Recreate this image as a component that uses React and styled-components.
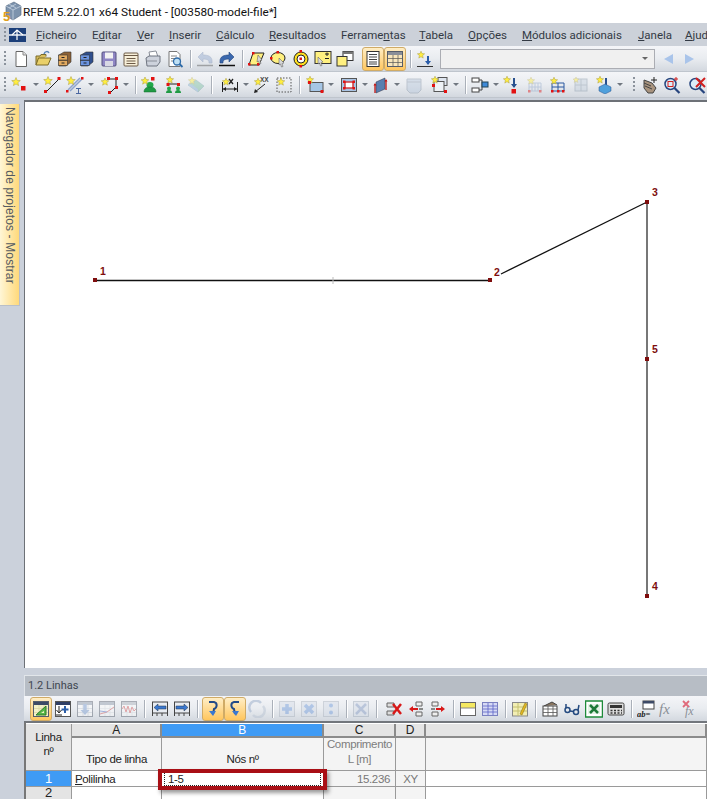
import React from 'react';
import styled, { createGlobalStyle } from 'styled-components';

const GlobalStyle = createGlobalStyle`
  html, body { margin: 0; padding: 0; background: #fff; }
  body { font-family: "Open Sans", "Liberation Sans", sans-serif; }
`;

const Page = styled.div`
  width: 707px;
  height: 799px;
  overflow: hidden;
  display: flex;
  flex-direction: column;
  background: #cbd1db;
`;

const TitleBar = styled.div`
  height: 23px;
  background: #fff;
  display: flex;
  align-items: center;
  padding-left: 2px;
  font-family: Roboto, sans-serif;
  font-size: 11.8px;
  color: #111;
  flex: none;
`;

const MenuBar = styled.div`
  height: 23px;
  background: #ccd1d9;
  display: flex;
  align-items: center;
  flex: none;
  white-space: nowrap;
`;

const LogoSlot = styled.div`
  width: 27px;
  flex: none;
  display: flex;
`;

const Grip = styled.div`
  width: 2px;
  height: ${({ $h }) => $h || 16}px;
  margin: 0 ${({ $r }) => $r ?? 3}px 0 ${({ $l }) => $l ?? 4}px;
  flex: none;
  background: repeating-linear-gradient(to bottom, #8b929c 0 2px, transparent 2px 4px);
`;

const MenuItem = styled.span`
  width: ${({ $w }) => $w}px;
  flex: none;
  font-family: Roboto, sans-serif;
  font-size: 11.5px;
  color: #333a44;
`;

const Toolbar = styled.div`
  height: ${({ $h }) => $h || 26}px;
  flex: none;
  display: flex;
  align-items: center;
  white-space: nowrap;
  overflow: hidden;
  padding-left: ${({ $pad }) => $pad || 0}px;
  background: linear-gradient(to bottom, #f4f5f8 0%, #e9ecf0 50%, #d3d8df 100%);
  border-bottom: 1px solid #bfc5cd;
  box-sizing: border-box;
`;

const ToolButton = styled.div`
  width: ${({ $w }) => $w || 22}px;
  height: 24px;
  flex: none;
  display: flex;
  align-items: center;
  justify-content: center;
  box-sizing: border-box;
  border-radius: 3px;
  border: ${({ $active }) => ($active ? '1px solid #d0ab66' : 'none')};
  background: ${({ $active }) => ($active ? 'linear-gradient(to bottom, #ffeec6, #ffc65e)' : 'none')};
  svg { opacity: ${({ $dim }) => ($dim ? 0.45 : 1)}; }
`;

const DropArrow = styled.div`
  width: ${({ $w }) => $w || 10}px;
  flex: none;
  display: flex;
  justify-content: center;
  &::after {
    content: "";
    border-left: 3px solid transparent;
    border-right: 3px solid transparent;
    border-top: 3px solid #707780;
  }
`;

const Separator = styled.div`
  width: ${({ $w }) => $w || 8}px;
  height: 18px;
  flex: none;
  display: flex;
  justify-content: center;
  &::after {
    content: "";
    width: 1px;
    height: 100%;
    background: #aab0b9;
    box-shadow: 1px 0 0 #fff;
  }
`;

const ComboBox = styled.div`
  width: 215px;
  height: 20px;
  flex: none;
  margin-left: 4px;
  box-sizing: border-box;
  border: 1px solid #abadb3;
  background: #f0f0f0;
  display: flex;
  align-items: center;
  justify-content: flex-end;
  padding-right: 6px;
  &::after {
    content: "";
    border-left: 3px solid transparent;
    border-right: 3px solid transparent;
    border-top: 3px solid #666;
  }
`;

const NavArrow = styled.div`
  width: 0;
  height: 0;
  flex: none;
  margin-left: ${({ $l }) => $l}px;
  border-top: 5px solid transparent;
  border-bottom: 5px solid transparent;
  ${({ $left }) => ($left ? 'border-right: 9px solid #a9c4ea;' : 'border-left: 9px solid #a9c4ea;')}
`;

const Main = styled.div`
  height: 568px;
  flex: none;
  margin-top: 2px;
  display: flex;
`;

const Rail = styled.div`
  width: 24px;
  flex: none;
  padding-top: 4px;
  box-sizing: border-box;
`;

const NavTab = styled.div`
  width: 20px;
  height: 202px;
  box-sizing: border-box;
  writing-mode: vertical-rl;
  padding: 3px 0 0 0;
  display: flex;
  align-items: center;
  font-family: "Liberation Sans", sans-serif;
  font-size: 12px;
  letter-spacing: 0.13px;
  color: #555a62;
  background: linear-gradient(to right, #fff6d6, #ffd97a);
  border-right: 1px solid #b9bfc8;
  border-bottom: 1px solid #b9bfc8;
`;

const Canvas = styled.div`
  flex: 1;
  background: #fff;
  border-left: 1px solid #6d7177;
  border-top: 2px solid #6d7177;
  box-sizing: border-box;
  svg { display: block; width: 100%; height: 100%; }
`;

const Panel = styled.div`
  margin: 7px 0 0 24px;
  flex: 1;
  display: flex;
  flex-direction: column;
  min-height: 0;
`;

const PanelTitle = styled.div`
  height: 21px;
  flex: none;
  background: #b7bdc5;
  border-top: 1px solid #e2e6ea;
  border-left: 1px solid #dfe3e8;
  box-sizing: border-box;
  padding-left: 3px;
  line-height: 20px;
  font-family: Roboto, sans-serif;
  font-size: 11px;
  color: #3e4650;
`;

const PanelBar = styled(Toolbar)`
  height: 27px;
  border-bottom: 2px solid #72767c;
`;

const TableGrid = styled.div`
  flex: 1;
  display: grid;
  grid-template-columns: 46px 90px 162px 72px 30px 1fr;
  grid-template-rows: 14px 33px 16px 13px;
  padding-top: 1px;
  background: #fff;
  border-left: 2px solid #777;
  font-family: "Liberation Sans", sans-serif;
  font-size: 11.5px;
  letter-spacing: -0.35px;
  color: #222;
`;

const Cell = styled.div`
  box-sizing: border-box;
  border-right: 1px solid #9a9a9a;
  border-bottom: 1px solid #9a9a9a;
  display: flex;
  align-items: center;
  justify-content: ${({ $align }) => $align || 'flex-start'};
  padding: 0 ${({ $pad }) => $pad ?? 3}px;
  position: relative;
  z-index: ${({ $raised }) => ($raised ? 2 : 'auto')};
  color: ${({ $color }) => $color || '#222'};
  background: ${({ $bg }) => $bg || '#fff'};
  white-space: nowrap;
`;

const ColHead = styled(Cell)`
  justify-content: center;
  background: ${({ $sel }) => ($sel ? '#3f9bf5' : '#e4e4e4')};
  color: ${({ $sel }) => ($sel ? '#fff' : '#222')};
  border-bottom: 2px solid #8b8b8b;
  border-right: 2px solid #8b8b8b;
  padding: 0;
  font-size: 12px;
`;

const CornerCell = styled(Cell)`
  grid-row: span 2;
  background: #e4e4e4;
  text-align: center;
  justify-content: center;
  line-height: 14px;
  padding: 0 0 6px;
`;

const SubHead = styled(Cell)`
  background: #f4f4f4;
  flex-direction: column;
  justify-content: flex-end;
  line-height: 15px;
  padding-bottom: 3px;
  color: ${({ $color }) => $color || '#222'};
`;

const RowHead = styled(Cell)`
  justify-content: center;
  background: ${({ $sel }) => ($sel ? '#3f9bf5' : '#e4e4e4')};
  color: ${({ $sel }) => ($sel ? '#fff' : '#222')};
  font-size: 13px;
  line-height: 12px;
`;

const FocusText = styled.span`
  flex: 1;
  outline: 1px dotted #222;
  height: 12px;
  line-height: 12px;
  padding-left: 3px;
`;

const Highlight = styled.div`
  position: absolute;
  left: -4px;
  right: -4px;
  top: -2px;
  height: 21px;
  box-sizing: border-box;
  border: 4px solid #a90f15;
  box-shadow: 2px 3px 4px rgba(0, 0, 0, 0.4);
  pointer-events: none;
`;

const R = ({ x, y, s = 3.5 }) => <rect x={x} y={y} width={s} height={s} fill="#e21212" />;
const S = ({ x = 4, y = 4, r = 3.8 }) => {
  const cx = Number(x);
  const cy = Number(y);
  const rad = Number(r);
  const pts = [];
  for (let i = 0; i < 10; i++) {
    const a = (Math.PI / 5) * i - Math.PI / 2;
    const d = i % 2 ? rad * 0.45 : rad;
    pts.push(`${(cx + d * Math.cos(a)).toFixed(1)},${(cy + d * Math.sin(a)).toFixed(1)}`);
  }
  return <polygon points={pts.join(' ')} fill="#ffee40" stroke="#a99b3c" strokeWidth="0.5" />;
};
const Tbl = ({ head = '#3c4a6a', fill = '#fff', line = '#8a94a5' }) => (
  <>
    <rect x="1.5" y="1.5" width="15" height="15" fill={fill} stroke="#555d6b" />
    <rect x="2" y="2" width="14" height="3" fill={head} />
    <path d="M2 8.5h14M2 12.5h14M7 5v11M12 5v11" stroke={line} strokeWidth="0.7" />
  </>
);
const Drawer = ({ a, b }) => (
  <>
    <path d="M3 5l5-3h7v10l-5 4H3z" fill={b} stroke="#333" strokeWidth="0.6" />
    <rect x="2.5" y="5" width="9" height="5" fill={a} stroke="#333" strokeWidth="0.6" />
    <rect x="2.5" y="10.5" width="9" height="5" fill={a} stroke="#333" strokeWidth="0.6" />
    <path d="M5.5 7.5h3M5.5 13h3" stroke="#222" strokeWidth="1" />
  </>
);

const ICONS = {
  doc: <><path d="M4 1.5h7l3.5 3.5v11.5H4z" fill="#fff" stroke="#666" /><path d="M11 1.5V5h3.5" fill="#e4e4e4" stroke="#888" /></>,
  folder: <><path d="M2 15V6h4l1-1.5h5v2" fill="#d9bf5e" stroke="#7a6a2a" /><path d="M2 15l2.5-7H17l-3 7z" fill="#e9d06a" stroke="#7a6a2a" /><path d="M10 4c1-3 4-3 5-1" fill="none" stroke="#5a86b8" strokeWidth="1.5" /></>,
  brown: <Drawer a="#e2aa60" b="#8e6236" />,
  blue: <Drawer a="#6b94e0" b="#2f4f8e" />,
  floppy: <><rect x="2" y="2" width="14" height="14" rx="1" fill="#8f86c4" stroke="#54507e" /><rect x="5" y="2.5" width="8" height="6" fill="#f2f2f2" /><rect x="5" y="11" width="8" height="5" fill="#d8d8e4" /></>,
  notes: <><rect x="2" y="3" width="14" height="13" rx="1" fill="#f7efd9" stroke="#6c5a46" /><path d="M2 5.5h14M4.5 8.5h9M4.5 11h9M4.5 13.5h9" stroke="#6c5a46" /></>,
  printer: <><path d="M5 2l7-1 2 6H6z" fill="#fff" stroke="#8a8f99" /><path d="M2 8l3-2h11v6l-3 4H3z" fill="#cdd2dc" stroke="#6e7480" /><path d="M3 11h10" stroke="#8a8f99" /></>,
  preview: <><path d="M3 1.5h8l3 3v12H3z" fill="#fff" stroke="#777" /><path d="M5 6h6M5 8.5h4M5 11h3" stroke="#888" /><circle cx="11" cy="11.5" r="3.5" fill="#bfe0f4" stroke="#2d6aa8" strokeWidth="1.3" /><path d="M13.5 14l3 3" stroke="#2d6aa8" strokeWidth="1.8" /></>,
  undo: <><path d="M2 7l5-5v3c6 0 9 2 9 6v2h-3v-1c0-2-2-3-6-3v3z" fill="#8fa6cc" stroke="#6b82a8" strokeWidth="0.6" /><path d="M1 15.5h16" stroke="#555" strokeWidth="1.5" /></>,
  redo: <><path d="M16 7l-5-5v3C5 5 2 7 2 11v2h3v-1c0-2 2-3 6-3v3z" fill="#3a68ae" stroke="#23457e" strokeWidth="0.6" /><path d="M1 15.5h16" stroke="#111" strokeWidth="1.5" /></>,
  area: <><path d="M5 3h11l-5 12H1z" fill="#fff080" stroke="#222" /><R x="4" y="2" s="2.5" /><R x="0" y="13" s="2.5" /><R x="9" y="13" s="2.5" /><path d="M10 5l4 5-2 .5 1 3-1.5.5-1-3-1.500 1z" fill="#d8d8d8" stroke="#555" strokeWidth="0.5" /></>,
  ellipse: <><ellipse cx="8" cy="8" rx="7" ry="5.5" fill="#fff080" stroke="#222" /><R x="6.5" y="1" s="2.5" /><R x="0" y="7" s="2.5" /><path d="M9 8l5 5-2 .5 1 3-1.5.5-1-3-1.500 1z" fill="#d8d8d8" stroke="#555" strokeWidth="0.5" /></>,
  ring: <><circle cx="9" cy="9" r="7" fill="#ffe020" stroke="#222" /><circle cx="9" cy="9" r="4" fill="#fff" stroke="#222" /><R x="7.5" y="7.5" s="2.5" /><R x="7.5" y="0" s="2.5" /><R x="7.5" y="15" s="2.5" /></>,
  boxPlus: <><rect x="1" y="1.5" width="16" height="12" fill="#fff080" stroke="#333" /><path d="M11 4h4M13 2.5v3.5M11 8.5h4" stroke="#222" /><path d="M4 7l5 5-2 .5 1 3-1.5.5-1-3-1.500 1z" fill="#d8d8d8" stroke="#555" strokeWidth="0.5" /></>,
  windows: <><rect x="7" y="1.5" width="10" height="9" fill="#fff" stroke="#333" /><rect x="7" y="1.5" width="10" height="2.5" fill="#777" /><rect x="1" y="6.5" width="10" height="9.5" fill="#fff080" stroke="#333" /></>,
  list: <><rect x="3" y="1.5" width="12" height="15" fill="#fff" stroke="#333" /><path d="M5 4.5h8M5 7h8M5 9.5h8M5 12h8M5 14h8" stroke="#444" /></>,
  table: <Tbl head="#8a8f98" fill="#f8e6bc" line="#555" />,
  starDown: <><S x="5" y="5" /><path d="M12 6v8" stroke="#2a5ca8" strokeWidth="2" /><path d="M9 11l3 4 3-4z" fill="#2a5ca8" /><path d="M1 16.5h16" stroke="#333" /></>,
  node: <><S x="5" y="6" r="4.5" /><R x="10" y="10" s="4.5" /></>,
  line: <><path d="M3 16L16 3" stroke="#222" /><S x="5" y="5" r="4.5" /><R x="1" y="14" s="3" /><R x="14.5" y="1" s="3" /></>,
  dim: <><path d="M2 14L14 2M4 15L16 3" stroke="#8ea4cc" strokeWidth="1.5" /><S x="5" y="5" r="4.5" /><R x="0" y="14" s="2.5" /><R x="15" y="1" s="2.5" /><path d="M10 12.5h5M12.5 12.5v5M10 17.5h5" stroke="#3c5a98" strokeWidth="0.9" /></>,
  poly: <><path d="M6 3h9v8l-6 6" fill="none" stroke="#222" /><S x="4" y="6" r="4" /><R x="6" y="1" s="3" /><R x="14" y="1" s="3" /><R x="14" y="10" s="3" /><R x="7" y="15" s="3" /></>,
  support: <><ellipse cx="9" cy="9" rx="3.5" ry="3" fill="#22a84a" /><path d="M3 16c0-4 3-5 6-5s6 1 6 5z" fill="#1f9a44" stroke="#0f6a2a" strokeWidth="0.5" /><S x="4" y="5" r="4" /><R x="10" y="1" s="3.5" /></>,
  supports: <><path d="M3 8h11" stroke="#222" /><circle cx="4" cy="12.5" r="2" fill="#22a84a" /><circle cx="13" cy="12.5" r="2" fill="#22a84a" /><path d="M1 17c0-2 1-3 3-3s3 1 3 3zM10 17c0-2 1-3 3-3s3 1 3 3z" fill="#1f9a44" /><S x="5" y="4" r="3.8" /><R x="1.5" y="7" s="3" /><R x="12" y="7" s="3" /></>,
  plate: <><path d="M1 9l8-5 8 6-6 6z" fill="#7dc0a0" stroke="#5a8a9a" strokeWidth="0.5" /><path d="M1 9l10 7v-3L2 7z" fill="#8ab2d8" /><S x="5" y="5" r="3.8" /></>,
  dimX: <><path d="M1.500 6v10M16.500 6v10M2 13h14" stroke="#222" /><path d="M2 13l3-2v4zM16 13l-3-2v4z" fill="#222" /><path d="M8 3l4 5M12 3L8 8" stroke="#222" strokeWidth="1.3" /><S x="5" y="6" r="3.8" /></>,
  arrowXX: <><path d="M2 16L12 8" stroke="#222" /><path d="M1 17l1-4 3 3z" fill="#222" /><text x="7" y="6" fontSize="6.5" fontWeight="bold" fontFamily="Liberation Sans" fill="#444">XX</text><S x="5" y="6" r="3.8" /></>,
  dashSq: <><rect x="2" y="2" width="14" height="14" fill="none" stroke="#555" strokeDasharray="1.5 1.5" /><S x="6" y="6" r="4" /></>,
  rectNew: <><rect x="4" y="6.5" width="13" height="9" fill="#a6c6e6" stroke="#555" /><S x="4" y="4" r="3.8" /><R x="2" y="5" s="3" /><R x="14.5" y="14" s="3" /></>,
  rectRed: <><rect x="1.5" y="2.5" width="15" height="13" fill="#a9c4e4" stroke="#555" /><rect x="5" y="6" width="8" height="6" fill="#fff" stroke="#d12020" strokeWidth="1.3" /><R x="3" y="4.5" s="2.5" /><R x="12.5" y="4.5" s="2.5" /><R x="3" y="11" s="2.5" /><R x="12.5" y="11" s="2.5" /></>,
  wall: <><path d="M4 6l9-4v11l-9 4z" fill="#5a7fb0" stroke="#334" strokeWidth="0.5" /><path d="M3 17V8M14 14V4" stroke="#c01818" strokeWidth="1.3" /><path d="M1.500 9.500L3 7l1.500 2.500zM12.500 5.500L14 3l1.500 2.500z" fill="#c01818" /></>,
  box: <><path d="M2 3h14v11l-3 3H5l-3-3z" fill="#b8c8dc" stroke="#8b99aa" /><path d="M2 6h14" stroke="#8b99aa" /></>,
  boxes: <><rect x="7" y="1.5" width="9" height="8" fill="#dfe6f0" stroke="#555" /><rect x="3" y="5.5" width="10" height="10" fill="#eef2f6" stroke="#555" /><S x="4" y="4" r="3.8" /><R x="1" y="8" s="3" /><R x="13" y="14" s="3" /></>,
  connect: <><rect x="1" y="2" width="7" height="4" fill="#fff" stroke="#444" /><rect x="1" y="12" width="7" height="4" fill="#fff" stroke="#444" /><path d="M8 4h3v10H8" fill="none" stroke="#444" /><rect x="11" y="6" width="6" height="5" fill="#3f8ad8" stroke="#245" /></>,
  starLoad: <><S x="4" y="4" r="3.8" /><path d="M11 2v9" stroke="#28508e" strokeWidth="2" /><path d="M8 8l3 4 3-4z" fill="#28508e" /><R x="8.5" y="13" s="4.5" /></>,
  netA: <><path d="M3 7h12v8H3zM9 7v8M6 7v8M12 7v8M3 11h12" fill="none" stroke="#8ea6c8" /><S x="5" y="5" r="3.8" /><R x="2" y="14" s="2.5" /><R x="13" y="14" s="2.5" /></>,
  netB: <><path d="M3 7h12v8H3zM9 7v8M3 11h12" fill="none" stroke="#2a58a0" /><S x="5" y="5" r="3.8" /><R x="2" y="14" s="2.5" /><R x="8" y="14" s="2.5" /><R x="13" y="14" s="2.5" /></>,
  netC: <><rect x="3" y="3" width="12" height="12" fill="#c4d0dc" stroke="#8a9aaa" /><path d="M3 9h12M9 3v12" stroke="#8a9aaa" /><S x="4" y="4" r="3" /></>,
  starBox: <><S x="5" y="4" r="3.8" /><path d="M11 2v7" stroke="#28508e" strokeWidth="2" /><path d="M4 11l6-3 6 3v4l-6 3-6-3z" fill="#4fa0dc" stroke="#28508e" strokeWidth="0.5" /></>,
  hand: <><path d="M3 4l8 3 4 5-3 5H7L3 12z" fill="#a8937e" stroke="#444" /><path d="M3 7l7 3M4 10l7 3" stroke="#444" /><path d="M13 1v6M10 4h6" stroke="#222" /></>,
  mag: <><circle cx="7.5" cy="8" r="5.5" fill="#dcecf8" stroke="#27457e" strokeWidth="1.5" /><path d="M11.5 12l5 5" stroke="#27457e" strokeWidth="2.2" /><rect x="5" y="5.5" width="5" height="5" fill="none" stroke="#d12020" /><path d="M13 1v4M11 3h4" stroke="#d12020" /></>,
  magX: <><circle cx="7.5" cy="8" r="5.5" fill="#dcecf8" stroke="#27457e" strokeWidth="1.5" /><path d="M11.5 12l5 5" stroke="#27457e" strokeWidth="2.2" /><path d="M8 2l9 9M17 2l-9 9" stroke="#d12020" strokeWidth="2" /></>,
  tblTri: <><Tbl head="#3d4a66" fill="#f3f0c8" line="#d8d4a0" /><path d="M4 15L14 6v9z" fill="#58b848" stroke="#2f7a2a" /><path d="M9 13l3-2v2z" fill="#f3f0c8" /></>,
  tblPlus: <><rect x="1.5" y="1.5" width="15" height="15" fill="#fff" stroke="#555" /><rect x="2" y="2" width="14" height="3" fill="#2f3f66" /><path d="M11 6v7M7.5 9.5h7" stroke="#2c5ea8" strokeWidth="2" /><path d="M5 6v6M2.5 10L5 13l2.5-3M2 15h6" stroke="#222" fill="none" /></>,
  tblDown: <><Tbl head="#8c98aa" line="#b8c0cc" /><path d="M9 4v8" stroke="#7a9cd0" strokeWidth="3.5" /><path d="M4.5 10L9 15l4.5-5z" fill="#7a9cd0" /></>,
  tblChart: <><Tbl head="#8c98aa" line="#d4d8de" /><path d="M2 14l7-2 7-5" stroke="#d85050" fill="none" /><path d="M2 11l7 1" stroke="#5070c8" /></>,
  tblWave: <><Tbl head="#a8aeb8" line="#d4d8de" /><path d="M2 9l2-3 2 6 2-6 2 7 2-6 2 4 2-2" stroke="#d85050" fill="none" /></>,
  arrL: <><rect x="1.5" y="2" width="15" height="11" fill="#e8ecf2" stroke="#444" /><path d="M1.500 13v3M6 13v3M11 13v3M16.500 13v3" stroke="#444" /><path d="M3 7.5l4-3.5v2h8v3H7v2z" fill="#3a78d0" stroke="#234" strokeWidth="0.5" /></>,
  arrR: <><rect x="1.5" y="2" width="15" height="11" fill="#e8ecf2" stroke="#444" /><path d="M1.500 13v3M6 13v3M11 13v3M16.500 13v3" stroke="#444" /><path d="M15 7.5l-4-3.5v2H3v3h8v2z" fill="#3a78d0" stroke="#234" strokeWidth="0.5" /></>,
  curveL: <><path d="M5 2h5c4 1 3 6 0 7l-1 5" fill="none" stroke="#234a88" strokeWidth="2" /><path d="M5 11l4 5 3-5z" fill="#3a78d0" /></>,
  curveR: <><path d="M13 2H8C4 3 5 8 8 9l1 5" fill="none" stroke="#234a88" strokeWidth="2" /><path d="M6 11l4 5 3-5z" fill="#3a78d0" /></>,
  sync: <><path d="M3 12A6.500 6.500 0 0 1 13 3" fill="none" stroke="#8ea4c4" strokeWidth="2.5" /><path d="M15 6A6.500 6.500 0 0 1 5 15" fill="none" stroke="#b4c0d0" strokeWidth="2.5" /></>,
  plus: <><rect x="1.5" y="1.5" width="15" height="15" fill="#d6dde8" stroke="#a8b0bc" /><path d="M9 4v10M4 9h10" stroke="#6a96d8" strokeWidth="3.5" /></>,
  cross: <><rect x="1.5" y="1.5" width="15" height="15" fill="#d6dde8" stroke="#a8b0bc" /><path d="M5 5l8 8M13 5l-8 8" stroke="#6a96d8" strokeWidth="3.5" /></>,
  colon: <><rect x="1.5" y="1.5" width="15" height="15" fill="#d6dde8" stroke="#a8b0bc" /><circle cx="9" cy="5.5" r="2" fill="#6a96d8" /><circle cx="9" cy="12.5" r="2" fill="#6a96d8" /></>,
  xBox: <><rect x="1.5" y="1.5" width="15" height="15" fill="#d6dde8" stroke="#9aa6b6" /><path d="M4 4l10 10M14 4L4 14" stroke="#7f96c0" strokeWidth="2.5" /></>,
  delCol: <><path d="M2 3h7v4H2zM2 11h7v4H2z" fill="#ddd" stroke="#666" /><path d="M8 4l8 10M16 4L8 14" stroke="#d81818" strokeWidth="2.5" /></>,
  colL: <><path d="M9 2h6v4H9zM9 12h6v4H9z" fill="#eee" stroke="#666" /><path d="M2 9l4-3v2h5v2H6v2z" fill="#d81818" /><path d="M12 9h4" stroke="#888" strokeWidth="2" /></>,
  colR: <><path d="M3 2h6v4H3zM3 12h6v4H3z" fill="#eee" stroke="#666" /><path d="M16 9l-4-3v2H7v2h5v2z" fill="#d81818" /><path d="M2 9h4" stroke="#888" strokeWidth="2" /></>,
  tblY: <><rect x="1.5" y="2.5" width="15" height="13" fill="#fff" stroke="#666" /><rect x="2" y="3" width="14" height="5" fill="#f4e860" /><path d="M2 8h14" stroke="#888" /></>,
  tblB: <><rect x="1.5" y="2.5" width="15" height="13" fill="#d6daf4" stroke="#7a80c0" /><path d="M2 6h14M2 9h14M2 12h14M7 3v12M12 3v12" stroke="#5a62c8" strokeWidth="0.8" /></>,
  tblEdit: <><rect x="1.5" y="2.5" width="15" height="13.5" fill="#f2eeb4" stroke="#888" /><path d="M2 7h14M2 11h14M7 3v13" stroke="#c4c070" /><path d="M9 14l5-11 2 1-5 11z" fill="#e4b820" stroke="#806a10" strokeWidth="0.5" /></>,
  folderTbl: <><path d="M3 6l8-4 5 3" fill="#8a7660" stroke="#444" /><rect x="2" y="6" width="14" height="10" fill="#fff" stroke="#444" /><path d="M2 9h14M2 12.500h14M7 6v10M12 6v10" stroke="#555" strokeWidth="0.8" /></>,
  glasses: <><circle cx="4.5" cy="10" r="2.5" fill="none" stroke="#244a80" strokeWidth="1.5" /><circle cx="13" cy="12" r="2.5" fill="none" stroke="#244a80" strokeWidth="1.5" /><path d="M7 11l3.500 .5M3 8V4M15 10l1-5" stroke="#244a80" strokeWidth="1.5" /></>,
  excel: <><rect x="0.5" y="1" width="17" height="16" fill="#fff" stroke="#1e8a3a" strokeWidth="1.5" /><rect x="3" y="4" width="12" height="10" fill="#e4f2e6" /><path d="M5 5l8 8M13 5l-8 8" stroke="#1e7a38" strokeWidth="2.5" /></>,
  calc: <><rect x="1" y="3" width="16" height="12" rx="1.5" fill="#dcdcdc" stroke="#444" /><rect x="3" y="5" width="12" height="3" fill="#333" /><path d="M3.500 10.500h2M7 10.500h2M10.500 10.500h2M14 10.500h1M3.500 13h2M7 13h2M10.500 13h2M14 13h1" stroke="#333" strokeWidth="1.3" /></>,
  abEq: <><rect x="6" y="1" width="11" height="8" fill="#fff" stroke="#444" /><rect x="6" y="1" width="11" height="2.5" fill="#3d4a66" /><text x="0" y="16.5" fontSize="8.5" fontWeight="bold" fontStyle="italic" fontFamily="Liberation Serif" fill="#222">ab=</text></>,
  fx: <text x="0" y="14" fontSize="15" fontStyle="italic" fontFamily="Liberation Serif" fill="#8a8f96">fx</text>,
  fxX: <><text x="4" y="15" fontSize="12" fontStyle="italic" fontFamily="Liberation Serif" fill="#8a8f96">fx</text><path d="M2 1l6 6M8 1L2 7" stroke="#e06a7a" strokeWidth="1.8" /></>,
};

const Icon = ({ k, size = 18 }) => (
  <svg width={size} height={size} viewBox="0 0 18 18">{ICONS[k]}</svg>
);

const LogoBadge = () => (
  <svg width="21" height="22" viewBox="0 0 21 22">
    <path d="M4 5l8-4 7 4v9l-8 5-7-4z" fill="#7d93ad" stroke="#52657c" strokeWidth="0.6" />
    <path d="M4 5l7 4 8-4M11 9v10M7 3l7 4M7 7l7-4" fill="none" stroke="#c8d4e2" strokeWidth="0.8" />
    <text x="1" y="20" fontSize="13" fontWeight="bold" fontFamily="Liberation Sans" fill="#e0a020">5</text>
  </svg>
);

const MenuLogo = () => (
  <svg width="17" height="14" viewBox="0 0 17 14">
    <rect width="17" height="14" fill="#1c3f7a" />
    <path d="M0 7h17" stroke="#fff" strokeWidth="1.4" />
    <path d="M3 7l5-5 6 5M8 2v10" stroke="#fff" strokeWidth="1.2" fill="none" />
  </svg>
);

const renderBar = (items) =>
  items.map((it, i) => {
    if (it === '|') return <Separator key={i} />;
    if (it === 'v') return <DropArrow key={i} />;
    if (typeof it === 'number') return <ToolButton key={i} $w={it} />;
    const [name, flag] = it.split(':');
    return (
      <ToolButton key={i} $active={flag === 'a'} $dim={flag === 'd'}>
        <Icon k={name} />
      </ToolButton>
    );
  });

const bar1 = [
  'doc', 'folder', 'brown', 'blue', 'floppy', 'notes', 'printer', 'preview', '|',
  'undo:d', 'redo', '|', 'area', 'ellipse', 'ring', 'boxPlus', 'windows', 6,
  'list:a', 'table:a', '|', 'starDown',
];

const bar2a = ['node', 'v', 'line', 1, 'dim', 'v', 3, 'poly', 'v', '|', 'support', 2, 'supports', 'plate:d', '|', 4];
const bar2b = ['dimX', 'v', 'arrowXX', 'dashSq', '|', 1, 'rectNew', 'v', 2, 'rectRed', 'v', 'wall', 'v', 1, 'box:d', 4, 'boxes', 'v'];
const bar2c = ['|', 'connect', 'v', 'starLoad', 1, 'netA:d', 1, 'netB', 1, 'netC:d', 1, 'starBox', 'v'];
const bar2d = [4, 'hand', 'mag', 3, 'magX'];

const panelBar = [
  'tblTri:a', 'tblPlus', 'tblDown:d', 'tblChart:d', 'tblWave:d', '|', 1, 'arrL', 'arrR', '|', 1,
  'curveL:a', 'curveR:a', 'sync:d', '|', 'plus:d', 'cross:d', 'colon:d', '|', 'xBox:d', '|', 3,
  'delCol', 'colL', 'colR', '|', 'tblY', 'tblB', '|', 'tblEdit', '|', 'folderTbl', 'glasses', 'excel',
  'calc', '|', 'abEq', 'fx', 'fxX',
];

const menu = [
  [56, 0, 'F', 'icheiro'], [45, 1], [32, 0, 'V', 'er'], [47, 0, 'I', 'nserir'],
  [53, 0, 'C', 'álculo'], [72, 0, 'R', 'esultados'], [78, 2], [49, 0, 'T', 'abela'],
  [54, 0, 'O', 'pções'], [116, 0, 'M', 'ódulos adicionais'], [47, 0, 'J', 'anela'], [40, 0, 'A', 'juda'],
];

const MenuLabel = ({ m }) => {
  if (m[1] === 1) return <>E<u>d</u>itar</>;
  if (m[1] === 2) return <>Ferrame<u>n</u>tas</>;
  return <><u>{m[2]}</u>{m[3]}</>;
};

const Node = ({ x, y }) => <rect x={x - 2} y={y - 2} width="4" height="4" fill="#7e0d0d" />;
const NodeLabel = ({ x, y, children }) => (
  <text x={x} y={y} fontFamily="Liberation Sans" fontSize="10.5" fontWeight="bold" fill="#7e0d0d">{children}</text>
);

const App = () => (
  <Page>
    <GlobalStyle />
    <TitleBar>
      <LogoBadge />
      <span>RFEM 5.22.01 x64 Student - [003580-model-file*]</span>
    </TitleBar>
    <MenuBar>
      <Grip />
      <LogoSlot><MenuLogo /></LogoSlot>
      {menu.map((m, i) => (
        <MenuItem key={i} $w={m[0]}><MenuLabel m={m} /></MenuItem>
      ))}
    </MenuBar>
    <Toolbar>
      <Grip />
      <ToolButton $w={1} />
      {renderBar(bar1)}
      <ComboBox />
      <NavArrow $left $l={9} />
      <NavArrow $l={12} />
    </Toolbar>
    <Toolbar>
      <Grip />
      {renderBar(bar2a)}
      {renderBar(bar2b)}
      {renderBar(bar2c)}
      <Grip $l={8} $r={0} />
      {renderBar(bar2d)}
    </Toolbar>
    <Main>
      <Rail>
        <NavTab>Navegador de projetos - Mostrar</NavTab>
      </Rail>
      <Canvas>
        <svg viewBox="25 102 682 566" preserveAspectRatio="none">
          <path d="M95 280.500H490" stroke="#111" strokeWidth="1.3" />
          <path d="M501 274L647 202" stroke="#111" strokeWidth="1.3" />
          <path d="M647 202V596" stroke="#777" strokeWidth="2" />
          <path d="M333 277v7" stroke="#bbb" />
          <Node x={95} y={280} />
          <Node x={490} y={280} />
          <Node x={647} y={202} />
          <Node x={647} y={359} />
          <Node x={647} y={596} />
          <NodeLabel x={100} y={275}>1</NodeLabel>
          <NodeLabel x={494} y={276}>2</NodeLabel>
          <NodeLabel x={652} y={196}>3</NodeLabel>
          <NodeLabel x={652} y={353}>5</NodeLabel>
          <NodeLabel x={652} y={590}>4</NodeLabel>
        </svg>
      </Canvas>
    </Main>
    <Panel>
      <PanelTitle>1.2 Linhas</PanelTitle>
      <PanelBar $pad={6}>{renderBar(panelBar)}</PanelBar>
      <TableGrid>
        <CornerCell>Linha<br />nº</CornerCell>
        <ColHead>A</ColHead>
        <ColHead $sel>B</ColHead>
        <ColHead>C</ColHead>
        <ColHead>D</ColHead>
        <ColHead />
        <SubHead>Tipo de linha</SubHead>
        <SubHead>Nós nº</SubHead>
        <SubHead $color="#7d7d7d">Comprimento<span>L [m]</span></SubHead>
        <SubHead />
        <SubHead />
        <RowHead $sel>1</RowHead>
        <Cell><span><u>P</u>olilinha</span></Cell>
        <Cell $raised>
          <FocusText>1-5</FocusText>
          <Highlight />
        </Cell>
        <Cell $align="flex-end" $color="#777" $bg="#f4f4f4" $pad={5}>15.236</Cell>
        <Cell $align="center" $color="#777" $bg="#f4f4f4">XY</Cell>
        <Cell />
        <RowHead>2</RowHead>
        <Cell />
        <Cell />
        <Cell $bg="#f4f4f4" />
        <Cell $bg="#f4f4f4" />
        <Cell />
      </TableGrid>
    </Panel>
  </Page>
);

export default App;
